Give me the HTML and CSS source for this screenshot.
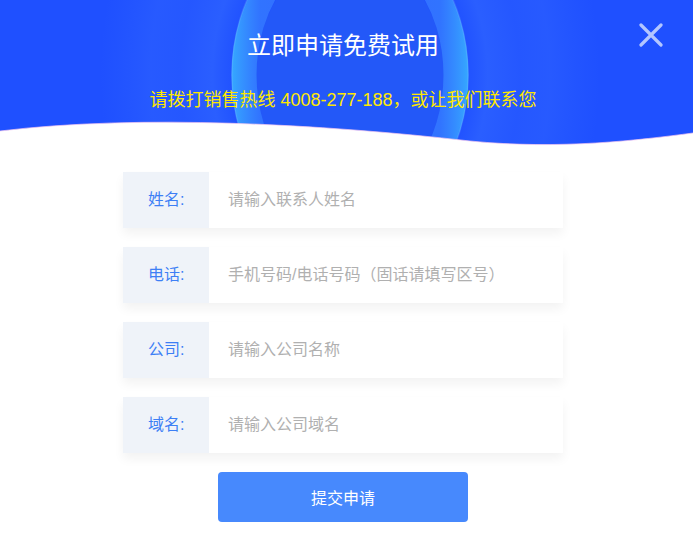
FILE: index.html
```html
<!DOCTYPE html>
<html lang="zh-CN">
<head>
<meta charset="utf-8">
<title>立即申请免费试用</title>
<link rel="stylesheet" href="styles.css">
</head>
<body>
<div class="page">
  <header class="hero">
    <svg class="hero-bg" width="693" height="160" viewBox="0 0 693 160" aria-hidden="true">
      <defs>
        <radialGradient id="halo" cx="0.5" cy="0.5" r="0.5">
          <stop offset="0" stop-color="#5aa0ff" stop-opacity="0"/>
          <stop offset="0.45" stop-color="#5aa0ff" stop-opacity="0"/>
          <stop offset="0.55" stop-color="#6ab0ff" stop-opacity="0.15"/>
          <stop offset="0.68" stop-color="#6aaaff" stop-opacity="0.08"/>
          <stop offset="0.8" stop-color="#6aaaff" stop-opacity="0.11"/>
          <stop offset="1" stop-color="#5a9cff" stop-opacity="0"/>
        </radialGradient>
        <linearGradient id="ring" x1="232" y1="0" x2="468" y2="0" gradientUnits="userSpaceOnUse">
          <stop offset="0" stop-color="#3cc4ff" stop-opacity="0.75"/>
          <stop offset="0.12" stop-color="#4aa4ff" stop-opacity="0.42"/>
          <stop offset="0.5" stop-color="#5a9cff" stop-opacity="0.34"/>
          <stop offset="0.88" stop-color="#4aa4ff" stop-opacity="0.42"/>
          <stop offset="1" stop-color="#3cc4ff" stop-opacity="0.75"/>
        </linearGradient>
      </defs>
      <rect width="693" height="160" fill="#1f50ff"/>
      <ellipse cx="350" cy="75" rx="250" ry="320" fill="url(#halo)"/>
      <ellipse cx="350" cy="75" rx="94" ry="122" fill="#2358f8"/>
      <ellipse cx="350" cy="75" rx="106" ry="138" fill="none" stroke="url(#ring)" stroke-width="25"/>
      <ellipse cx="350" cy="75" rx="118" ry="154" fill="none" stroke="#8ac0ff" stroke-opacity="0.22" stroke-width="1.5"/>
      <path d="M0,131 C140,114 320,124 470,141 C560,150 640,140 693,133 L693,160 L0,160 Z" fill="#ffffff"/>
      <path d="M0,131 C140,114 320,124 470,141 C560,150 640,140 693,133" fill="none" stroke="#f2c6f0" stroke-opacity="0.7" stroke-width="1"/>
    </svg>
    <h1 class="hero-title">立即申请免费试用</h1>
    <p class="hero-sub">请拨打销售热线 4008-277-188，或让我们联系您</p>
    <button class="close" type="button" aria-label="关闭">
      <svg width="24" height="24" viewBox="0 0 24 24"><path d="M2 2 L22 22 M22 2 L2 22" stroke="#b3c6ff" stroke-width="3.2" stroke-linecap="round" fill="none"/></svg>
    </button>
  </header>
  <form class="form">
    <div class="row"><label class="label">姓名:</label><input class="field" placeholder="请输入联系人姓名"></div>
    <div class="row"><label class="label">电话:</label><input class="field" placeholder="手机号码/电话号码（固话请填写区号）"></div>
    <div class="row"><label class="label">公司:</label><input class="field" placeholder="请输入公司名称"></div>
    <div class="row"><label class="label">域名:</label><input class="field" placeholder="请输入公司域名"></div>
    <button class="submit" type="button">提交申请</button>
  </form>
</div>
</body>
</html>
```
FILE: styles.css
```css
* { box-sizing: border-box; }
html, body {
  margin: 0;
  padding: 0;
  background: #ffffff;
  font-family: "Liberation Sans", "Noto Sans CJK SC", sans-serif;
}
.page {
  width: 693px;
  height: 539px;
  overflow: hidden;
}
.hero {
  position: relative;
  height: 160px;
  width: 686px;
  display: flex;
  flex-direction: column;
  align-items: center;
  padding-top: 34px;
}
.hero-bg {
  position: absolute;
  left: 0;
  top: 0;
  z-index: 0;
}
.hero-title {
  position: relative;
  margin: 0;
  font-size: 24px;
  line-height: 24px;
  font-weight: normal;
  color: #ffffff;
}
.hero-sub {
  position: relative;
  margin: 33px 0 0;
  font-size: 18px;
  line-height: 18px;
  color: #ffe800;
}
.close {
  position: absolute;
  left: 639px;
  top: 23px;
  width: 24px;
  height: 24px;
  padding: 0;
  border: 0;
  background: none;
  display: block;
}
.close svg { display: block; }
.form {
  width: 686px;
  margin: 0;
  padding-top: 12px;
  display: flex;
  flex-direction: column;
  align-items: center;
  gap: 19px;
}
.row {
  width: 440px;
  height: 56px;
  display: flex;
  background: #ffffff;
  box-shadow: 0 6px 10px rgba(0, 0, 0, 0.05);
}
.label {
  width: 86px;
  flex: none;
  background: #eff3f9;
  color: #3d7ff5;
  font-size: 16px;
  line-height: 56px;
  padding-left: 25px;
}
.field {
  flex: 1;
  border: 0;
  outline: none;
  background: #ffffff;
  padding: 0 0 0 19px;
  font-size: 16px;
  font-family: "Liberation Sans", "Noto Sans CJK SC", sans-serif;
  color: #333333;
}
.field::placeholder { color: #b0b0b0; }
.submit {
  width: 250px;
  height: 50px;
  border: 0;
  border-radius: 4px;
  background: #4789fd;
  color: #ffffff;
  font-size: 16px;
  font-family: "Liberation Sans", "Noto Sans CJK SC", sans-serif;
}
```
